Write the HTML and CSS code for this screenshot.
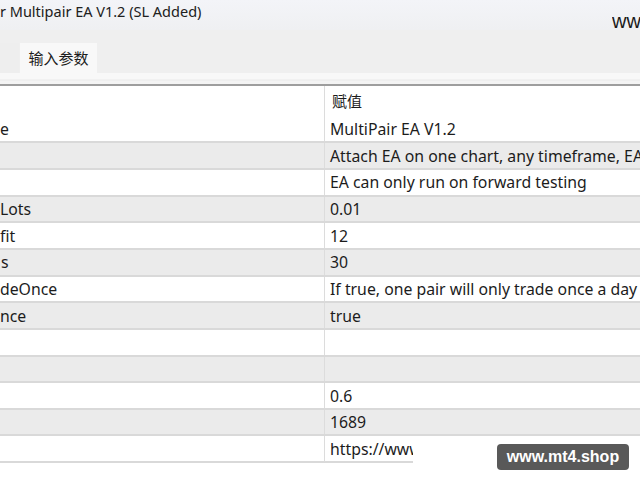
FILE: index.html
```html
<!DOCTYPE html>
<html lang="zh">
<head>
  <meta charset="UTF-8">
  <title>Multipair EA V1.2 (SL Added)</title>
  <link rel="stylesheet" href="styles.css">
</head>
<body>
  <div class="window">
    <div class="titlebar">
      <span class="title">r Multipair EA V1.2 (SL Added)</span>
      <span class="brand">www</span>
    </div>

    <div class="tabstrip">
      <div class="tab-prev"></div>
      <div class="tab active">输入参数</div>
    </div>
    <div class="tab-base"></div>

    <div class="grid">
      <div class="row head">
        <div class="cell name"></div>
        <div class="cell value">赋值</div>
      </div>
      <div class="row">
        <div class="cell name">e</div>
        <div class="cell value">MultiPair EA V1.2</div>
      </div>
      <div class="row alt">
        <div class="cell name"></div>
        <div class="cell value">Attach EA on one chart, any timeframe, EA will trade all pairs</div>
      </div>
      <div class="row">
        <div class="cell name"></div>
        <div class="cell value">EA can only run on forward testing</div>
      </div>
      <div class="row alt">
        <div class="cell name">Lots</div>
        <div class="cell value">0.01</div>
      </div>
      <div class="row">
        <div class="cell name">fit</div>
        <div class="cell value">12</div>
      </div>
      <div class="row alt">
        <div class="cell name pad">s</div>
        <div class="cell value">30</div>
      </div>
      <div class="row">
        <div class="cell name">deOnce</div>
        <div class="cell value">If true, one pair will only trade once a day</div>
      </div>
      <div class="row alt">
        <div class="cell name">nce</div>
        <div class="cell value">true</div>
      </div>
      <div class="row">
        <div class="cell name"></div>
        <div class="cell value"></div>
      </div>
      <div class="row alt">
        <div class="cell name"></div>
        <div class="cell value"></div>
      </div>
      <div class="row">
        <div class="cell name"></div>
        <div class="cell value">0.6</div>
      </div>
      <div class="row alt">
        <div class="cell name"></div>
        <div class="cell value">1689</div>
      </div>
      <div class="row last">
        <div class="cell name"></div>
        <div class="cell value short">https://www.mt4.shop</div>
      </div>
    </div>
  </div>

  <div class="watermark">www.mt4.shop</div>
</body>
</html>
```

FILE: styles.css
```css
body {
  margin: 0;
  width: 640px;
  height: 480px;
  overflow: hidden;
  background: #fff;
  font-family: "Noto Sans", "Noto Sans CJK SC", sans-serif;
  font-size: 15.8px;
  color: #1c1c1c;
}

.titlebar {
  height: 30px;
  display: flex;
  justify-content: space-between;
  align-items: flex-start;
  background: linear-gradient(#f3f4f8, #eff0f2);
  overflow: hidden;
}

.title {
  font-size: 14.5px;
  line-height: 23px;
  color: #202020;
}

.brand {
  font-family: "Liberation Sans", Arial, sans-serif;
  font-size: 20px;
  line-height: 20px;
  margin-top: 11px;
  width: 28px;
  overflow: hidden;
  white-space: nowrap;
  color: #1a1a1a;
}

.tabstrip {
  height: 43px;
  display: flex;
  align-items: flex-end;
  background: #efefef;
}

.tab-prev {
  width: 19px;
  height: 30px;
  background: #eeeeee;
}

.tab {
  margin-left: 1px;
  width: 77px;
  height: 30px;
  line-height: 30px;
  text-align: center;
  font-family: "Noto Sans CJK SC", sans-serif;
  font-size: 15px;
}

.tab.active {
  background: #f8f8f8;
}

.tab-base {
  height: 11px;
  background: linear-gradient(#f8f8f8 0, #f8f8f8 6px, #eaeaea 7px, #f4f4f4 8px);
  border-bottom: 2px solid #9e9e9e;
}

.row {
  display: flex;
  height: 26.67px;
  box-sizing: border-box;
  border-bottom: 2px solid #d9d9d9;
  background: #fff;
}

.row.alt {
  background: #ebebeb;
}

.row.head {
  height: 30.6px;
  border-bottom: none;
  align-items: center;
}

.cell {
  padding-top: 1.5px;
  line-height: 23px;
  white-space: nowrap;
  overflow: hidden;
}

.cell.name {
  width: 325px;
  box-sizing: border-box;
  border-right: 1px solid #dcdcdc;
}

.cell.name.pad {
  padding-left: 1px;
}

.cell.value {
  flex: 1;
  padding-left: 5px;
}

.row.head .cell {
  height: 100%;
  padding-top: 0;
  line-height: 30px;
  font-family: "Noto Sans CJK SC", sans-serif;
  font-size: 15px;
}

.row.head .cell.value {
  padding-left: 7px;
}

.row.last {
  border-bottom: none;
}

.row.last .cell.name {
  border-bottom: 2px solid #d9d9d9;
}

.cell.value.short {
  flex: none;
  width: 83px;
  border-bottom: 2px solid #d9d9d9;
}

.watermark {
  position: absolute;
  left: 497px;
  top: 444px;
  width: 132px;
  height: 26px;
  line-height: 26px;
  text-align: center;
  border-radius: 4px;
  background: #595959;
  color: #fff;
  font-family: "Liberation Sans", Arial, sans-serif;
  font-weight: bold;
  font-size: 16px;
}
```
